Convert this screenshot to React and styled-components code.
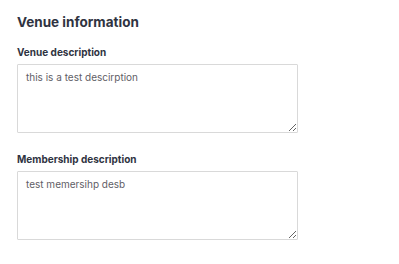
import React from "react";
import styled, { createGlobalStyle } from "styled-components";

const GlobalStyle = createGlobalStyle`
  body {
    margin: 0;
    background: #ffffff;
    font-family: Inter, "Noto Sans", sans-serif;
  }
`;

const Section = styled.section`
  display: flex;
  flex-direction: column;
  padding: 14px 17px 0;
  width: 280px;
`;

const Title = styled.h2`
  margin: 0 0 15px;
  font-size: 13.5px;
  line-height: 17px;
  font-weight: 700;
  color: #2f3341;
`;

const Field = styled.div`
  display: flex;
  flex-direction: column;
  margin-bottom: 20px;
`;

const Label = styled.label`
  font-size: 10px;
  line-height: 13px;
  font-weight: 700;
  color: #2f3341;
  margin-bottom: 5px;
`;

const TextArea = styled.textarea`
  box-sizing: border-box;
  width: 281px;
  height: 69px;
  margin: 0;
  padding: 5px 8px;
  border: 1px solid #d9d9d9;
  border-radius: 1px;
  font-family: Inter, "Noto Sans", sans-serif;
  font-size: 10px;
  line-height: 14px;
  color: #5f6066;
  resize: vertical;
  outline: none;
`;

const fields = [
  { id: "venue", label: "Venue description", value: "this is a test descirption" },
  { id: "membership", label: "Membership description", value: "test memersihp desb" },
];

export default function App() {
  return (
    <>
      <GlobalStyle />
      <Section>
        <Title>Venue information</Title>
        {fields.map((f) => (
          <Field key={f.id}>
            <Label htmlFor={f.id}>{f.label}</Label>
            <TextArea id={f.id} defaultValue={f.value} />
          </Field>
        ))}
      </Section>
    </>
  );
}
